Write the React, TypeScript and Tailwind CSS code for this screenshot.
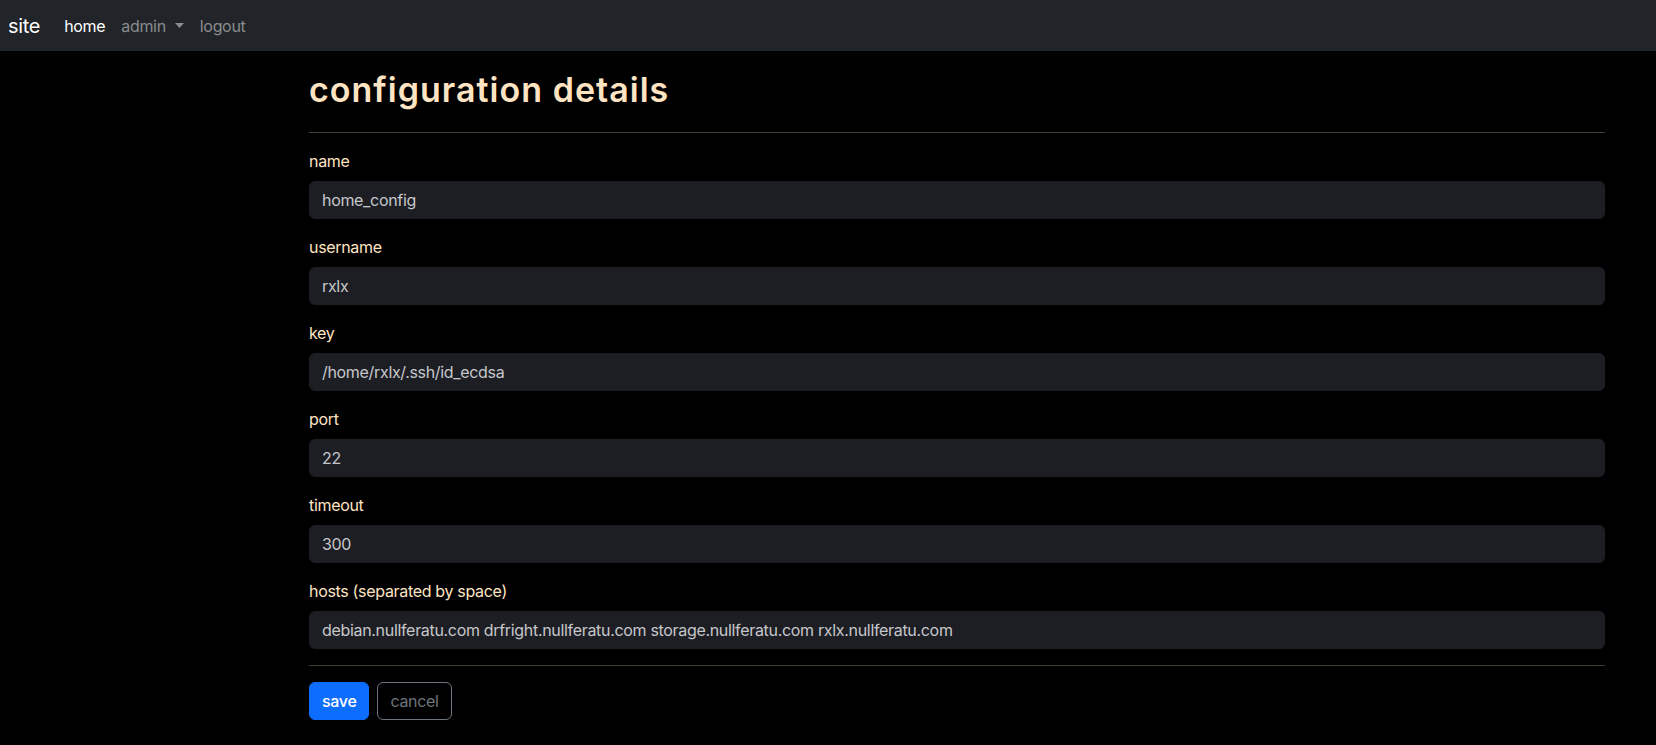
import React from "react";

const fields: { label: string; value: string }[] = [
  { label: "name", value: "home_config" },
  { label: "username", value: "rxlx" },
  { label: "key", value: "/home/rxlx/.ssh/id_ecdsa" },
  { label: "port", value: "22" },
  { label: "timeout", value: "300" },
  {
    label: "hosts (separated by space)",
    value:
      "debian.nullferatu.com drfright.nullferatu.com storage.nullferatu.com rxlx.nullferatu.com",
  },
];

export default function App() {
  return (
    <div
      className="min-h-[745px] bg-black text-[#ffe4c4] tracking-[-0.02em]"
      style={{ fontFamily: "Inter, 'Noto Sans', sans-serif" }}
    >
      <nav className="flex h-[51px] items-center bg-[#212529] pl-[8px]">
        <span className="mr-[16px] text-[20px] leading-[30px] text-white">site</span>
        <div className="flex items-center text-[16px] leading-[24px]">
          <span className="px-[8px] text-white">home</span>
          <span className="flex items-center px-[8px] text-[#8a8c8e]">
            admin
            <svg className="ml-[9px]" width="9" height="5" viewBox="0 0 9 5">
              <path d="M0 0 L9 0 L4.5 5 Z" fill="#8a8c8e" />
            </svg>
          </span>
          <span className="px-[8px] text-[#8a8c8e]">logout</span>
        </div>
      </nav>

      <main className="ml-[309px] w-[1296px] pt-[20px]">
        <h1 className="mb-0 text-[34px] font-semibold leading-[37px] tracking-[0.03em]">
          configuration details
        </h1>
        <hr className="mt-[24px] mb-[16px] border-0 border-t border-[#453d33]" />
        {fields.map((f) => (
          <div key={f.label} className="mb-[16px]">
            <label className="mb-[8px] block text-[16px] leading-[24px]">{f.label}</label>
            <div className="flex h-[38px] items-center rounded-[6px] border border-[#1d1e24] bg-[#1d1e24] px-[12px] text-[16px] text-[#c6c7ca]">
              {f.value}
            </div>
          </div>
        ))}
        <hr className="mt-[15px] mb-[16px] border-0 border-t border-[#453d33]" />
        <div className="flex gap-[8px]">
          <button className="h-[38px] rounded-[6px] border border-[#0d6efd] bg-[#0d6efd] px-[12px] text-[16px] font-medium text-white">
            save
          </button>
          <button className="h-[38px] rounded-[6px] border border-[#6c757d] bg-transparent px-[12px] text-[16px] text-[#6c757d]">
            cancel
          </button>
        </div>
      </main>
    </div>
  );
}
